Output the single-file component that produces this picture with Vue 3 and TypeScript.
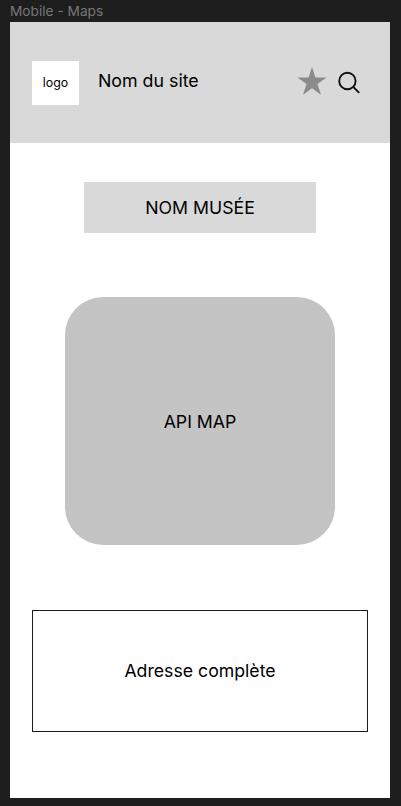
<script setup lang="ts">
const frameName: string = 'Mobile - Maps'
const siteName: string = 'Nom du site'
const museumName: string = 'NOM MUSÉE'
</script>

<template>
  <div class="canvas">
    <div class="frame-label">{{ frameName }}</div>
    <main class="screen">
      <header class="header">
        <div class="logo">logo</div>
        <span class="site-name">{{ siteName }}</span>
        <svg class="star" width="30" height="28" viewBox="0 0 30 28" aria-hidden="true">
          <path d="M15 0L18.4 10.6H29.6L20.5 17.1L24 27.8L15 21.2L6 27.8L9.5 17.1L0.4 10.6H11.6Z" fill="#8b8b8b" />
        </svg>
        <svg class="search" width="24" height="24" viewBox="0 0 24 24" fill="none" stroke="#111" stroke-width="1.9" aria-hidden="true">
          <circle cx="10.4" cy="11" r="8.2" />
          <path d="M16.2 16.8L22.2 22.8" />
        </svg>
      </header>
      <h1 class="museum">{{ museumName }}</h1>
      <section class="map"><span>API MAP</span></section>
      <section class="address"><span>Adresse complète</span></section>
    </main>
  </div>
</template>

<style>
body {
  margin: 0;
  background: #1e1e1e;
}
</style>

<style scoped>
.canvas {
  box-sizing: border-box;
  width: 401px;
  height: 806px;
  padding: 0 11px 8px 10px;
  background: #1e1e1e;
  color: #000;
  font-family: Inter, "Liberation Sans", sans-serif;
  font-size: 17.7px;
  line-height: 22px;
  overflow: hidden;
}

.frame-label {
  height: 22px;
  color: #777;
  font-size: 13.7px;
  line-height: 22px;
  white-space: nowrap;
}

.screen {
  display: flex;
  flex-direction: column;
  align-items: center;
  height: 776px;
  background: #fff;
}

.header {
  box-sizing: border-box;
  display: flex;
  align-items: center;
  align-self: flex-start;
  width: 379.5px;
  height: 120.5px;
  padding: 0 28.5px 0 22.4px;
  background: #d9d9d9;
}

.logo {
  box-sizing: border-box;
  display: flex;
  align-items: center;
  justify-content: center;
  width: 46.4px;
  height: 44.5px;
  margin-top: 1px;
  background: #fff;
  font-size: 12.4px;
  line-height: 16px;
}

.site-name {
  margin: 0 auto 3px 19.2px;
  font-size: 17.8px;
  white-space: nowrap;
}

.star {
  margin-bottom: 3px;
}

.search {
  margin-left: 10px;
}

.museum {
  box-sizing: border-box;
  display: flex;
  align-items: center;
  justify-content: center;
  width: 232.5px;
  height: 50.5px;
  margin: 39.5px 0 0;
  padding-top: 2px;
  background: #d9d9d9;
  font-size: 17.7px;
  font-weight: 400;
}

.map {
  box-sizing: border-box;
  display: flex;
  align-items: center;
  justify-content: center;
  width: 270px;
  height: 248px;
  margin-top: 64.5px;
  padding-top: 2px;
  border-radius: 38px;
  background: #c4c4c4;
}

.address {
  box-sizing: border-box;
  display: flex;
  align-items: center;
  justify-content: center;
  width: 336px;
  height: 121.5px;
  margin-top: 65px;
  padding-top: 1px;
  border: 1px solid #1c1c1c;
}
</style>
